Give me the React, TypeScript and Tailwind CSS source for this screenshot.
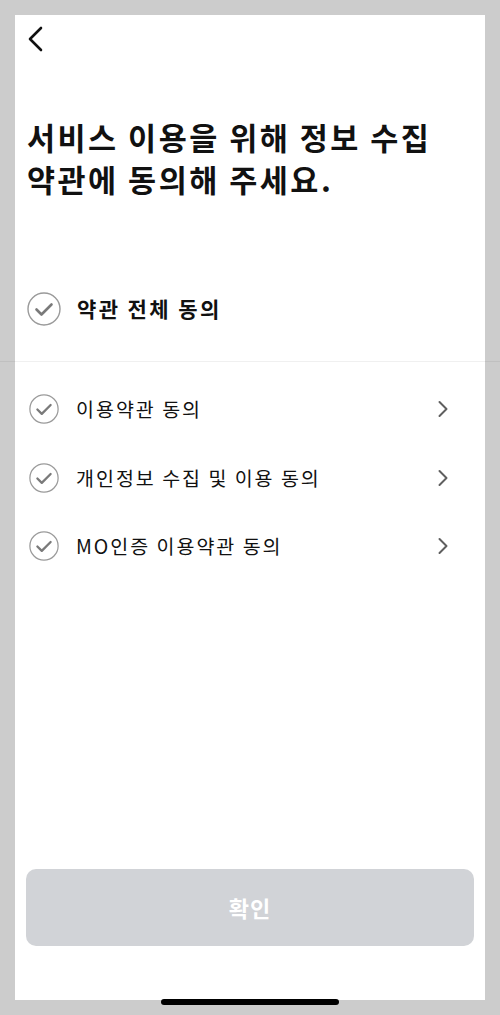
import React from "react";

const font = { fontFamily: '"Noto Sans CJK KR", "Noto Sans", sans-serif' };

function CheckCircle({ size }: { size: number }) {
  return (
    <svg width={size} height={size} viewBox="0 0 34 34" fill="none">
      <circle cx="17" cy="17" r="16" stroke="#9a9a9a" strokeWidth="1.4" />
      <path d="M9.5 17.5 L14.5 22.5 L24.5 12.5" stroke="#7a7a7a" strokeWidth="2.6" strokeLinecap="round" strokeLinejoin="round" />
    </svg>
  );
}

function Chevron() {
  return (
    <svg width="12" height="18" viewBox="0 0 12 18" fill="none">
      <path d="M2.5 2 L9.5 9 L2.5 16" stroke="#5f5f5f" strokeWidth="2" strokeLinecap="round" strokeLinejoin="round" />
    </svg>
  );
}

const items = ["이용약관 동의", "개인정보 수집 및 이용 동의", "MO인증 이용약관 동의"];

export default function App() {
  return (
    <div className="relative w-[500px] h-[1015px] bg-[#cccccc] px-[15px] pt-[15px] overflow-hidden" style={font}>
      <div className="bg-white h-[985px] flex flex-col">
        <div className="h-[50px] flex items-center pl-[12px]">
          <svg width="18" height="30" viewBox="0 0 18 30" fill="none">
            <path d="M14 3 L3 14 L14 25" stroke="#111" strokeWidth="2.6" strokeLinecap="round" strokeLinejoin="round" />
          </svg>
        </div>
        <h1 className="mt-[51px] pl-[12px] text-[30.5px] leading-[42px] font-bold text-[#111] tracking-[2.5px]">
          서비스 이용을 위해 정보 수집
          <br />
          약관에 동의해 주세요.
        </h1>
        <div className="mt-[89px] flex items-center pl-[12px] h-[40px] gap-[16px]">
          <CheckCircle size={34} />
          <span className="text-[21px] font-bold text-[#111] tracking-[2.4px]">약관 전체 동의</span>
        </div>
        <div className="mt-[32px] -mx-[15px] h-px bg-black/[0.06]" />
        <div className="mt-[32px] flex flex-col gap-[38.5px] pl-[14px] pr-[36px]">
          {items.map((t) => (
            <div key={t} className="flex items-center h-[30px]">
              <CheckCircle size={30} />
              <span className="ml-[17px] text-[19.5px] text-[#111] flex-1 tracking-[2px]">{t}</span>
              <Chevron />
            </div>
          ))}
        </div>
        <div className="flex-1" />
        <button className="mx-[11px] mb-[54px] h-[77px] rounded-[10px] bg-[#d1d3d7] text-white text-[22px] font-semibold tracking-[1px]">
          확인
        </button>
      </div>
      <div className="absolute left-[161px] bottom-[10px] w-[178px] h-[6px] rounded-full bg-black" />
    </div>
  );
}
